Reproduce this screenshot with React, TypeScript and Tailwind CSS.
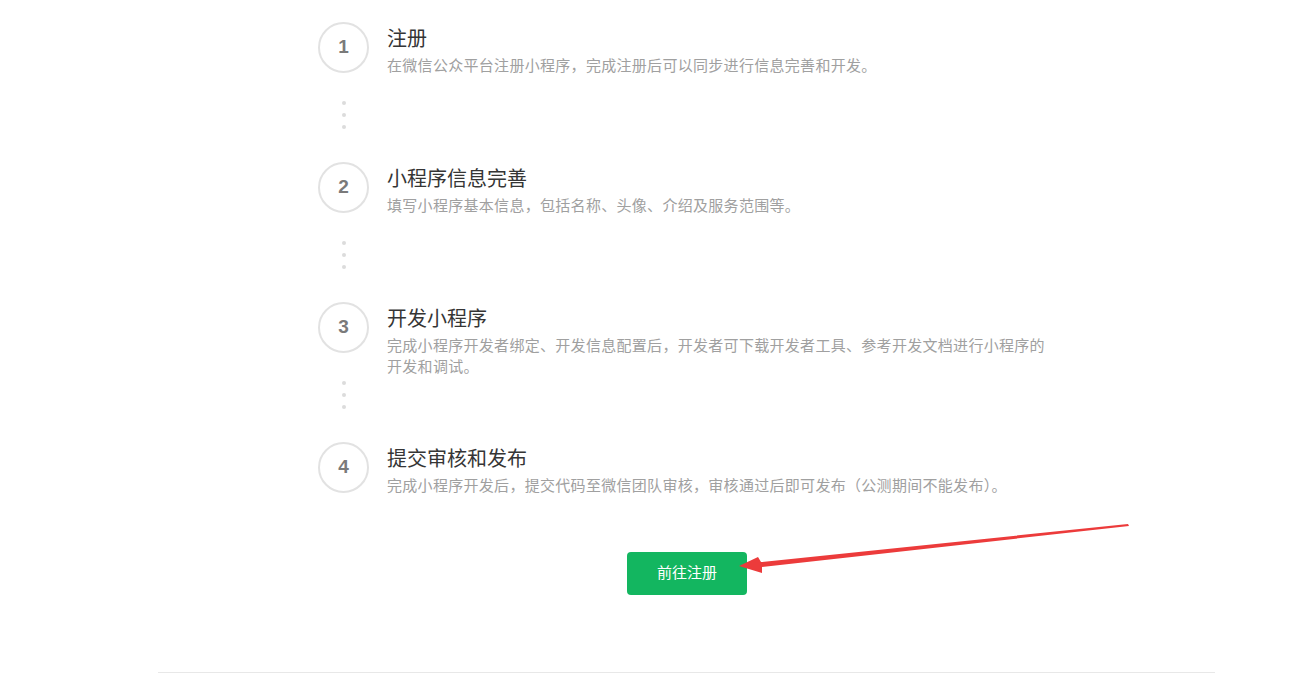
import React from "react";

const steps = [
  { n: "1", title: "注册", desc: "在微信公众平台注册小程序，完成注册后可以同步进行信息完善和开发。" },
  { n: "2", title: "小程序信息完善", desc: "填写小程序基本信息，包括名称、头像、介绍及服务范围等。" },
  { n: "3", title: "开发小程序", desc: "完成小程序开发者绑定、开发信息配置后，开发者可下载开发者工具、参考开发文档进行小程序的开发和调试。" },
  { n: "4", title: "提交审核和发布", desc: "完成小程序开发后，提交代码至微信团队审核，审核通过后即可发布（公测期间不能发布）。" },
];

export default function App() {
  return (
    <div
      className="relative w-[1311px] h-[689px] bg-white overflow-hidden"
      style={{ fontFamily: '"Liberation Sans", "Noto Sans CJK SC", sans-serif' }}
    >
      <div className="pl-[318px] pt-[22px]">
        {steps.map((s, i) => (
          <div key={s.n} className={`flex ${i < steps.length - 1 ? "h-[140px]" : "h-[80px]"}`}>
            <div className="w-[51px] flex flex-col items-center shrink-0">
              <div className="w-[51px] h-[51px] rounded-full border-2 border-[#e2e2e2] flex items-center justify-center text-[19px] font-bold text-[#7a7a7a]">
                {s.n}
              </div>
              {i < steps.length - 1 && (
                <div className="flex flex-col items-center gap-[8px] mt-[28px]">
                  <span className="w-[4px] h-[4px] rounded-full bg-[#dcdcdc]" />
                  <span className="w-[4px] h-[4px] rounded-full bg-[#dcdcdc]" />
                  <span className="w-[4px] h-[4px] rounded-full bg-[#dcdcdc]" />
                </div>
              )}
            </div>
            <div className="ml-[18px] pt-[4px] w-[665px]">
              <div className="text-[20px] leading-[26px] text-[#353535]">{s.title}</div>
              <div className="text-[15px] leading-[21px] tracking-[0.3px] text-[#a0a0a0] mt-[3px]">{s.desc}</div>
            </div>
          </div>
        ))}
      </div>
      <div className="flex pl-[627px] mt-[30px]">
        <button className="w-[120px] h-[43px] rounded-[4px] bg-[#13b660] text-white text-[15px]">
          前往注册
        </button>
      </div>
      <div className="ml-[158px] mt-[77px] w-[1057px] border-t border-[#e8e8e8]" />
      <svg className="absolute left-0 top-0 pointer-events-none" width="1311" height="689">
        <polygon points="1128,524 1129,526 762,567 762,573 739,566 758,557 761,562" fill="#ec3b3b" />
      </svg>
    </div>
  );
}
